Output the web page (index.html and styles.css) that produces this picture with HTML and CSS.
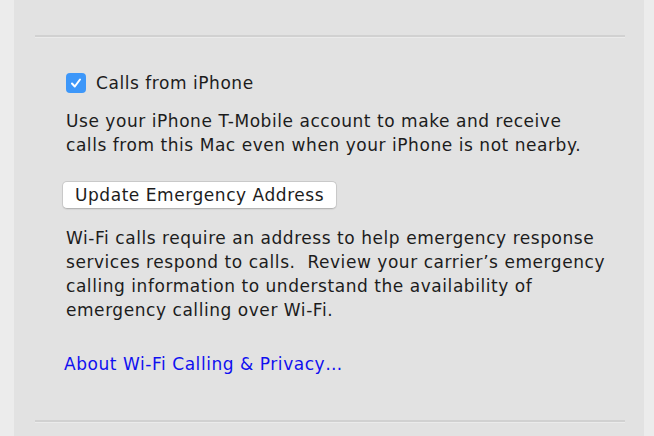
FILE: index.html
```html
<!DOCTYPE html>
<html lang="en">
<head>
  <meta charset="UTF-8">
  <title>Calls from iPhone</title>
  <link rel="stylesheet" href="styles.css">
</head>
<body>
  <div class="panel">
    <div class="divider"></div>

    <div class="section">
      <label class="check-row">
        <span class="checkbox">
          <svg width="12" height="12" viewBox="0 0 12 12">
            <path d="M2 6.5 L4.8 9.5 L10 2.5" fill="none" stroke="#fff" stroke-width="2" stroke-linecap="round" stroke-linejoin="round"/>
          </svg>
        </span>
        Calls from iPhone
      </label>

      <p class="text">Use your iPhone T-Mobile account to make and receive<br>calls from this Mac even when your iPhone is not nearby.</p>

      <button class="btn">Update Emergency Address</button>

      <p class="text note">Wi-Fi calls require an address to help emergency response<br>services respond to calls.&nbsp; Review your carrier’s emergency<br>calling information to understand the availability of<br>emergency calling over Wi-Fi.</p>

      <a class="link" href="#">About Wi-Fi Calling &amp; Privacy…</a>
    </div>

    <div class="divider"></div>
  </div>
</body>
</html>
```

FILE: styles.css
```css
html, body {
  margin: 0;
  padding: 0;
  height: 100%;
}

body {
  background: #ececec;
  font-family: "DejaVu Sans", Verdana, sans-serif;
  font-size: 17px;
  letter-spacing: 0.55px;
  color: #1c1c1c;
  overflow: hidden;
}

.panel {
  margin: 0 10px 0 14px;
  height: 100%;
  background: #e2e2e2;
  padding: 35px 19px 0 21px;
  box-sizing: border-box;
}

.divider {
  border-top: 2px solid #d1d1d1;
  border-bottom: 1px solid #ebebeb;
}

.section {
  padding: 35px 0 44px 31px;
}

.check-row {
  display: flex;
  align-items: center;
  gap: 10px;
  height: 20px;
  line-height: 20px;
}

.checkbox {
  width: 20px;
  height: 20px;
  border-radius: 4px;
  background: #3d97f9;
  display: flex;
  align-items: center;
  justify-content: center;
}

.text {
  margin: 16px 0 0;
  line-height: 24px;
}

.btn {
  display: block;
  margin: 24px 0 0 -4px;
  height: 28px;
  padding: 0 12px;
  font-family: inherit;
  font-size: 17px;
  letter-spacing: inherit;
  color: #1c1c1c;
  background: #fff;
  border: 1px solid #c9c9c9;
  border-bottom-color: #b5b5b5;
  border-radius: 5px;
  box-shadow: 0 1px 1px rgba(0, 0, 0, 0.06);
}

.note {
  margin-top: 17px;
}

.link {
  display: block;
  margin-top: 30px;
  line-height: 24px;
  color: #1010f0;
  text-decoration: none;
  margin-left: -2px;
}
```
